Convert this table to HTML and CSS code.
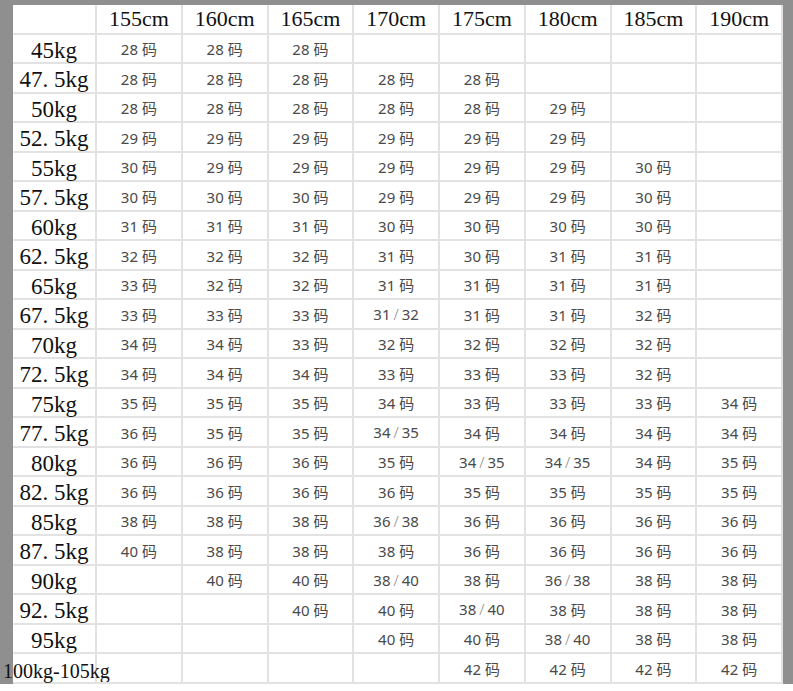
FILE: index.html
```html
<!DOCTYPE html>
<html lang="zh">
<head>
<meta charset="utf-8">
<title>尺码表</title>
<link rel="stylesheet" href="styles.css">
</head>
<body>
<div class="frame">
<div class="chart">
<div class="h corner"></div><div class="h">155cm</div><div class="h">160cm</div><div class="h">165cm</div><div class="h">170cm</div><div class="h">175cm</div><div class="h">180cm</div><div class="h">185cm</div><div class="h">190cm</div>
<div class="l">45kg</div><div class="c">28 码</div><div class="c">28 码</div><div class="c">28 码</div><div class="c"></div><div class="c"></div><div class="c"></div><div class="c"></div><div class="c"></div>
<div class="l">47. 5kg</div><div class="c">28 码</div><div class="c">28 码</div><div class="c">28 码</div><div class="c">28 码</div><div class="c">28 码</div><div class="c"></div><div class="c"></div><div class="c"></div>
<div class="l">50kg</div><div class="c">28 码</div><div class="c">28 码</div><div class="c">28 码</div><div class="c">28 码</div><div class="c">28 码</div><div class="c">29 码</div><div class="c"></div><div class="c"></div>
<div class="l">52. 5kg</div><div class="c">29 码</div><div class="c">29 码</div><div class="c">29 码</div><div class="c">29 码</div><div class="c">29 码</div><div class="c">29 码</div><div class="c"></div><div class="c"></div>
<div class="l">55kg</div><div class="c">30 码</div><div class="c">29 码</div><div class="c">29 码</div><div class="c">29 码</div><div class="c">29 码</div><div class="c">29 码</div><div class="c">30 码</div><div class="c"></div>
<div class="l">57. 5kg</div><div class="c">30 码</div><div class="c">30 码</div><div class="c">30 码</div><div class="c">29 码</div><div class="c">29 码</div><div class="c">29 码</div><div class="c">30 码</div><div class="c"></div>
<div class="l">60kg</div><div class="c">31 码</div><div class="c">31 码</div><div class="c">31 码</div><div class="c">30 码</div><div class="c">30 码</div><div class="c">30 码</div><div class="c">30 码</div><div class="c"></div>
<div class="l">62. 5kg</div><div class="c">32 码</div><div class="c">32 码</div><div class="c">32 码</div><div class="c">31 码</div><div class="c">30 码</div><div class="c">31 码</div><div class="c">31 码</div><div class="c"></div>
<div class="l">65kg</div><div class="c">33 码</div><div class="c">32 码</div><div class="c">32 码</div><div class="c">31 码</div><div class="c">31 码</div><div class="c">31 码</div><div class="c">31 码</div><div class="c"></div>
<div class="l">67. 5kg</div><div class="c">33 码</div><div class="c">33 码</div><div class="c">33 码</div><div class="c">31<span class="s">/</span>32</div><div class="c">31 码</div><div class="c">31 码</div><div class="c">32 码</div><div class="c"></div>
<div class="l">70kg</div><div class="c">34 码</div><div class="c">34 码</div><div class="c">33 码</div><div class="c">32 码</div><div class="c">32 码</div><div class="c">32 码</div><div class="c">32 码</div><div class="c"></div>
<div class="l">72. 5kg</div><div class="c">34 码</div><div class="c">34 码</div><div class="c">34 码</div><div class="c">33 码</div><div class="c">33 码</div><div class="c">33 码</div><div class="c">32 码</div><div class="c"></div>
<div class="l">75kg</div><div class="c">35 码</div><div class="c">35 码</div><div class="c">35 码</div><div class="c">34 码</div><div class="c">33 码</div><div class="c">33 码</div><div class="c">33 码</div><div class="c">34 码</div>
<div class="l">77. 5kg</div><div class="c">36 码</div><div class="c">35 码</div><div class="c">35 码</div><div class="c">34<span class="s">/</span>35</div><div class="c">34 码</div><div class="c">34 码</div><div class="c">34 码</div><div class="c">34 码</div>
<div class="l">80kg</div><div class="c">36 码</div><div class="c">36 码</div><div class="c">36 码</div><div class="c">35 码</div><div class="c">34<span class="s">/</span>35</div><div class="c">34<span class="s">/</span>35</div><div class="c">34 码</div><div class="c">35 码</div>
<div class="l">82. 5kg</div><div class="c">36 码</div><div class="c">36 码</div><div class="c">36 码</div><div class="c">36 码</div><div class="c">35 码</div><div class="c">35 码</div><div class="c">35 码</div><div class="c">35 码</div>
<div class="l">85kg</div><div class="c">38 码</div><div class="c">38 码</div><div class="c">38 码</div><div class="c">36<span class="s">/</span>38</div><div class="c">36 码</div><div class="c">36 码</div><div class="c">36 码</div><div class="c">36 码</div>
<div class="l">87. 5kg</div><div class="c">40 码</div><div class="c">38 码</div><div class="c">38 码</div><div class="c">38 码</div><div class="c">36 码</div><div class="c">36 码</div><div class="c">36 码</div><div class="c">36 码</div>
<div class="l">90kg</div><div class="c"></div><div class="c">40 码</div><div class="c">40 码</div><div class="c">38<span class="s">/</span>40</div><div class="c">38 码</div><div class="c">36<span class="s">/</span>38</div><div class="c">38 码</div><div class="c">38 码</div>
<div class="l">92. 5kg</div><div class="c"></div><div class="c"></div><div class="c">40 码</div><div class="c">40 码</div><div class="c">38<span class="s">/</span>40</div><div class="c">38 码</div><div class="c">38 码</div><div class="c">38 码</div>
<div class="l">95kg</div><div class="c"></div><div class="c"></div><div class="c"></div><div class="c">40 码</div><div class="c">40 码</div><div class="c">38<span class="s">/</span>40</div><div class="c">38 码</div><div class="c">38 码</div>
<div class="l wide"><span class="wide-text">100kg-105kg</span></div><div class="c"></div><div class="c"></div><div class="c"></div><div class="c"></div><div class="c">42 码</div><div class="c">42 码</div><div class="c">42 码</div><div class="c">42 码</div>
</div>
</div>
</body>
</html>
```

FILE: styles.css
```css
html, body {
  margin: 0;
  padding: 0;
  background: #ffffff;
}

.frame {
  width: 793px;
  box-sizing: border-box;
  background: #8f8f8f;
  padding: 5px 10px 0 13px;
  height: 684px;
}

.chart {
  display: grid;
  grid-template-columns: 84px repeat(8, 1fr);
  grid-auto-rows: 29.5px;
  background: #ffffff;
}

.chart > div {
  box-sizing: border-box;
  border-right: 2px solid #e2e2e2;
  border-bottom: 2px solid #e2e2e2;
  display: flex;
  align-items: center;
  justify-content: center;
  white-space: nowrap;
  min-width: 0;
}

.h {
  font-family: "Liberation Serif", "DejaVu Serif", serif;
  font-size: 22px;
  color: #111111;
  padding-top: 1px;
}

.l {
  font-family: "Liberation Serif", "DejaVu Serif", serif;
  font-size: 23px;
  color: #111111;
  padding-top: 5px;
}

.chart > .wide {
  justify-content: flex-start;
  font-size: 20px;
  padding-top: 8px;
}

.wide-text {
  margin-left: -10px;
}

.c {
  font-family: "Noto Sans", "Noto Sans CJK SC", sans-serif;
  font-size: 15px;
  color: #4a4a4a;
  padding-top: 1px;
}

.s {
  color: #8a8a8a;
  margin: 0 3px;
  font-weight: 300;
}
```
